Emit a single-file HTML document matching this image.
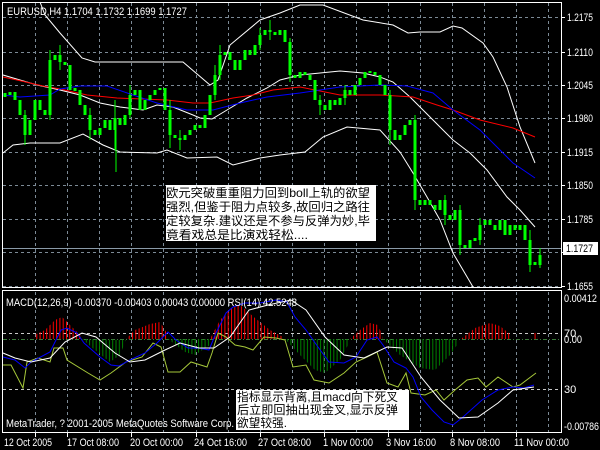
<!DOCTYPE html>
<html><head><meta charset="utf-8"><style>
html,body{margin:0;padding:0;background:#000;}
svg{display:block}
text{font-family:"Liberation Sans","Noto Sans CJK SC",sans-serif;}
</style></head><body>
<svg width="600" height="450" viewBox="0 0 600 450" xmlns="http://www.w3.org/2000/svg">
<defs>
<pattern id="pr" width="3.3" height="10" patternUnits="userSpaceOnUse"><rect x="0" y="0" width="1" height="10" fill="#ff0000"/></pattern>
<pattern id="pg" width="3.3" height="10" patternUnits="userSpaceOnUse"><rect x="0" y="0" width="1" height="10" fill="#008000"/></pattern>
</defs>
<rect width="600" height="450" fill="#000"/>
<g stroke="#7c8a96" stroke-width="1" stroke-dasharray="3,3" fill="none">
<path d="M3 17.5H561M3 52.5H561M3 85.5H561M3 118.5H561M3 152.5H561M3 185.5H561M3 219.5H561M3 252.5H561M3 286.5H561"/>
<path d="M35.5 3V287M67.5 3V287M99.5 3V287M131.5 3V287M163.5 3V287M196.5 3V287M228.5 3V287M260.5 3V287M292.5 3V287M324.5 3V287M356.5 3V287M388.5 3V287M420.5 3V287M452.5 3V287M484.5 3V287M516.5 3V287M548.5 3V287"/>
<path d="M35.5 292V432M67.5 292V432M99.5 292V432M131.5 292V432M163.5 292V432M196.5 292V432M228.5 292V432M260.5 292V432M292.5 292V432M324.5 292V432M356.5 292V432M388.5 292V432M420.5 292V432M452.5 292V432M484.5 292V432M516.5 292V432M548.5 292V432"/>
<path d="M3 333.5H561M3 389.5H561" stroke="#c8c8c8"/>
</g>
<path d="M3 339.5H561" stroke="#3a7a3a" stroke-dasharray="4,2,1,2"/>
<path d="M3 248.5H561" stroke="#8a9aa8"/>
<g fill="none" stroke="#fff" stroke-width="1">
<polyline points="40,2 45,15 60,33 82,58 95,62 183,62 210,85 218,80 230,45 260,20 280,13 300,5 323,5 363,20 393,25 408,33 420,32 440,32 453,26 462,28 483,43 493,57 507,87 520,127 535,163"/>
<polyline points="3,75 20,80 37,85 60,90 80,95 100,103 120,107 143,110 157,105 173,107 193,115 200,118 212,119 227,110 247,98 267,88 280,80 300,75 340,71 363,73 380,77 393,82 410,97 423,110 440,127 453,140 470,153 487,170 507,197 520,210 535,227"/>
<polyline points="3,153 13,145 30,143 60,143 83,134 103,145 120,152 157,153 167,150 187,158 217,157 233,165 260,158 280,155 305,152 323,137 347,127 380,130 400,152 413,173 427,197 440,220 453,253 473,287"/>
</g>
<polyline fill="none" stroke="#ff0000" points="3,77 17,80 43,86 60,89 87,95 117,98 167,100 193,103 210,103 233,98 253,95 273,90 300,87 340,95 380,95 413,97 437,105 453,110 480,120 513,128 535,137"/>
<polyline fill="none" stroke="#0000ff" points="3,95 20,97 50,95 60,89 80,86 107,86 133,95 157,103 187,110 213,110 240,103 267,97 300,93 340,87 380,85 407,86 433,93 453,110 480,130 513,163 535,178"/>
<path fill="none" stroke="#00ff00" stroke-width="1" d="M25 110V145M50 50V120M60 45V70M90 108V140M115 100V150M130 85V118M170 100V148M180 130V150M215 65V100M220 45V80M260 28V50M270 20V40M290 38V82M320 95V115M345 85V105M390 90V145M415 115V210M445 195V225M460 205V255M480 218V245M530 230V272M540 248V268M116 120V172"/>
<path fill="none" stroke="#00ff00" stroke-width="3" d="M5 93V97M10 92V95M15 92V100M20 100V115M25 115V135M30 120V135M35 100V120M40 100V110M45 110V115M50 60V115M55 55V60M60 55V62M65 62V65M70 65V90M75 88V91M80 90V105M85 105V115M90 115V130M95 130V135M100 128V135M105 120V128M110 120V130M115 118V130M120 118V125M125 115V125M130 95V115M135 90V95M140 90V110M145 100V110M150 95V100M155 90V95M160 88V90M165 88V110M170 110V135M175 135V138M180 138V140M185 135V140M190 130V135M195 125V130M200 125V128M205 115V128M210 95V115M215 75V95M220 55V75M225 52V55M230 52V60M235 60V70M240 60V70M245 50V60M250 50V55M255 45V55M260 35V45M265 30V35M270 30V32M275 32V35M280 30V35M285 30V42M290 42V75M295 75V78M300 72V78M305 72V75M310 75V80M315 80V100M320 100V105M325 105V110M330 100V110M335 100V105M340 98V105M345 90V98M350 90V95M355 85V95M360 78V85M365 72V78M370 71V73M375 72V75M380 75V85M385 85V95M390 95V130M395 130V140M400 135V140M405 125V135M410 120V125M415 120V200M420 200V205M425 200V205M430 200V205M435 205V210M440 200V210M445 200V215M450 215V220M455 210V220M460 210V245M465 245V248M470 240V248M475 238V241M480 225V240M485 220V225M490 220V225M495 225V230M500 220V230M505 220V235M510 225V235M515 225V230M520 225V230M525 225V240M530 240V265M535 262V265M540 255V265"/>
<g fill="none" stroke="#fff">
<rect x="2.5" y="2.5" width="559" height="285"/>
<rect x="2.5" y="290.5" width="559" height="142"/>
<path d="M35.5 433V437M67.5 433V437M131.5 433V437M196.5 433V437M260.5 433V437M324.5 433V437M388.5 433V437M452.5 433V437M516.5 433V437M562 17.5H565M562 52.5H565M562 85.5H565M562 118.5H565M562 152.5H565M562 185.5H565M562 219.5H565M562 252.5H565M562 286.5H565"/>
</g>
<polygon fill="url(#pr)" points="34,339 34,335 45,330 55,320 62,317 70,325 82,337 82,339"/>
<polygon fill="url(#pg)" points="82,339 95,350 110,362 120,355 126,340"/>
<polygon fill="url(#pr)" points="126,339 135,330 150,324 160,322 168,335 168,339"/>
<polygon fill="url(#pg)" points="168,339 185,352 195,355 210,345 210,339"/>
<polygon fill="url(#pr)" points="210,339 220,320 232,308 240,305 255,318 270,330 283,337 283,339"/>
<polygon fill="url(#pg)" points="285,339 300,355 315,370 325,373 340,360 348,345 348,339"/>
<polygon fill="url(#pr)" points="350,339 360,330 370,323 378,325 383,337 383,339"/>
<polygon fill="url(#pg)" points="383,339 400,355 420,368 435,370 450,355 457,345 457,339"/>
<polygon fill="url(#pr)" points="461,339 475,328 490,323 500,326 511,335 511,339"/>
<polygon fill="url(#pr)" points="534,333 538,333 538,339 534,339"/>
<polyline fill="none" stroke="#a6c83a" points="3,365 11,365 23,388 27,362 38,358 50,362 54,348 63,348 67,360 88,373 100,380 111,373 126,362 142,357 153,343 161,347 168,372 180,372 191,362 207,367 212,353 218,333 226,337 235,345 245,347 253,350 264,337 276,338 285,340 293,367 306,365 314,380 329,383 344,373 356,362 367,357 377,352 387,383 398,387 406,373 411,393 425,395 436,390 444,400 455,390 467,380 478,378 486,387 498,377 513,387 520,385 536,373"/>
<polyline fill="none" stroke="#0000ff" points="3,357 15,360 25,368 31,362 50,352 61,330 67,328 77,333 84,343 100,357 111,365 119,366 130,360 145,353 157,343 168,332 176,340 188,348 199,348 209,350 216,333 226,313 233,307 245,303 260,303 276,300 287,302 295,317 306,330 318,347 329,362 344,363 356,357 367,340 377,337 383,345 394,362 406,368 413,377 421,397 432,410 444,422 453,425 463,417 482,400 498,390 513,387 524,388 534,385"/>
<polyline fill="none" stroke="#fff" points="3,353 15,358 31,362 50,358 65,342 82,333 96,337 115,353 130,362 145,360 165,350 180,343 199,348 214,348 230,337 249,310 268,305 291,300 306,310 325,337 344,355 364,358 387,347 402,348 421,377 440,400 459,418 478,417 498,403 513,390 534,387"/>
<g fill="#fff" font-size="11">
<text x="7" y="15" textLength="180" lengthAdjust="spacingAndGlyphs">EURUSD,H4  1.1704 1.1732 1.1699 1.1727</text>
<text x="6" y="306" textLength="291" lengthAdjust="spacingAndGlyphs">MACD(12,26,9) -0.00370 -0.00403 0.00043 0.00000  RSI(14) 42.5248</text>
<text x="6" y="427" textLength="228" lengthAdjust="spacingAndGlyphs">MetaTrader, ? 2001-2005 MetaQuotes Software Corp.</text>
<text x="567" y="21" textLength="26" lengthAdjust="spacingAndGlyphs">1.2175</text>
<text x="567" y="56" textLength="26" lengthAdjust="spacingAndGlyphs">1.2110</text>
<text x="567" y="89" textLength="26" lengthAdjust="spacingAndGlyphs">1.2045</text>
<text x="567" y="122" textLength="26" lengthAdjust="spacingAndGlyphs">1.1980</text>
<text x="567" y="156" textLength="26" lengthAdjust="spacingAndGlyphs">1.1915</text>
<text x="567" y="189" textLength="26" lengthAdjust="spacingAndGlyphs">1.1850</text>
<text x="567" y="223" textLength="26" lengthAdjust="spacingAndGlyphs">1.1785</text>
<text x="567" y="290" textLength="26" lengthAdjust="spacingAndGlyphs">1.1655</text>
<text x="564" y="302" textLength="33" lengthAdjust="spacingAndGlyphs">0.00412</text>
<text x="564" y="337">70</text>
<text x="564" y="343" textLength="18" lengthAdjust="spacingAndGlyphs">0.00</text>
<text x="564" y="393">30</text>
<text x="564" y="430" textLength="35" lengthAdjust="spacingAndGlyphs">-0.00786</text>
<text x="4" y="446" textLength="48" lengthAdjust="spacingAndGlyphs">12 Oct 2005</text>
<text x="67" y="446" textLength="52" lengthAdjust="spacingAndGlyphs">17 Oct 08:00</text>
<text x="130" y="446" textLength="53" lengthAdjust="spacingAndGlyphs">20 Oct 00:00</text>
<text x="194" y="446" textLength="53" lengthAdjust="spacingAndGlyphs">24 Oct 16:00</text>
<text x="258" y="446" textLength="53" lengthAdjust="spacingAndGlyphs">27 Oct 08:00</text>
<text x="323" y="446" textLength="50" lengthAdjust="spacingAndGlyphs">1 Nov 00:00</text>
<text x="386" y="446" textLength="50" lengthAdjust="spacingAndGlyphs">3 Nov 16:00</text>
<text x="450" y="446" textLength="50" lengthAdjust="spacingAndGlyphs">8 Nov 08:00</text>
<text x="514" y="446" textLength="55" lengthAdjust="spacingAndGlyphs">11 Nov 00:00</text>
</g>
<rect x="563" y="242" width="35" height="13" fill="#fff"/>
<text x="566" y="252" font-size="11" fill="#000" textLength="27" lengthAdjust="spacingAndGlyphs">1.1727</text>
<rect x="166" y="185" width="210" height="56" fill="#fff"/>
<g fill="#000" font-size="12">
<text x="166" y="197" textLength="204" lengthAdjust="spacingAndGlyphs">欧元突破重重阻力回到boll上轨的欲望</text>
<text x="166" y="211" textLength="204" lengthAdjust="spacingAndGlyphs">强烈,但鉴于阻力点较多,故回归之路往</text>
<text x="166" y="225" textLength="204" lengthAdjust="spacingAndGlyphs">定较复杂.建议还是不参与反弹为妙,毕</text>
<text x="166" y="239" textLength="142" lengthAdjust="spacingAndGlyphs">竟看戏总是比演戏轻松....</text>
</g>
<rect x="236" y="390" width="173" height="40" fill="#fff"/>
<g fill="#000" font-size="12">
<text x="237" y="401" textLength="161" lengthAdjust="spacingAndGlyphs">指标显示背离,且macd向下死叉</text>
<text x="237" y="414" textLength="161" lengthAdjust="spacingAndGlyphs">后立即回抽出现金叉,显示反弹</text>
<text x="237" y="427" textLength="50" lengthAdjust="spacingAndGlyphs">欲望较强.</text>
</g>
</svg>
</body></html>
